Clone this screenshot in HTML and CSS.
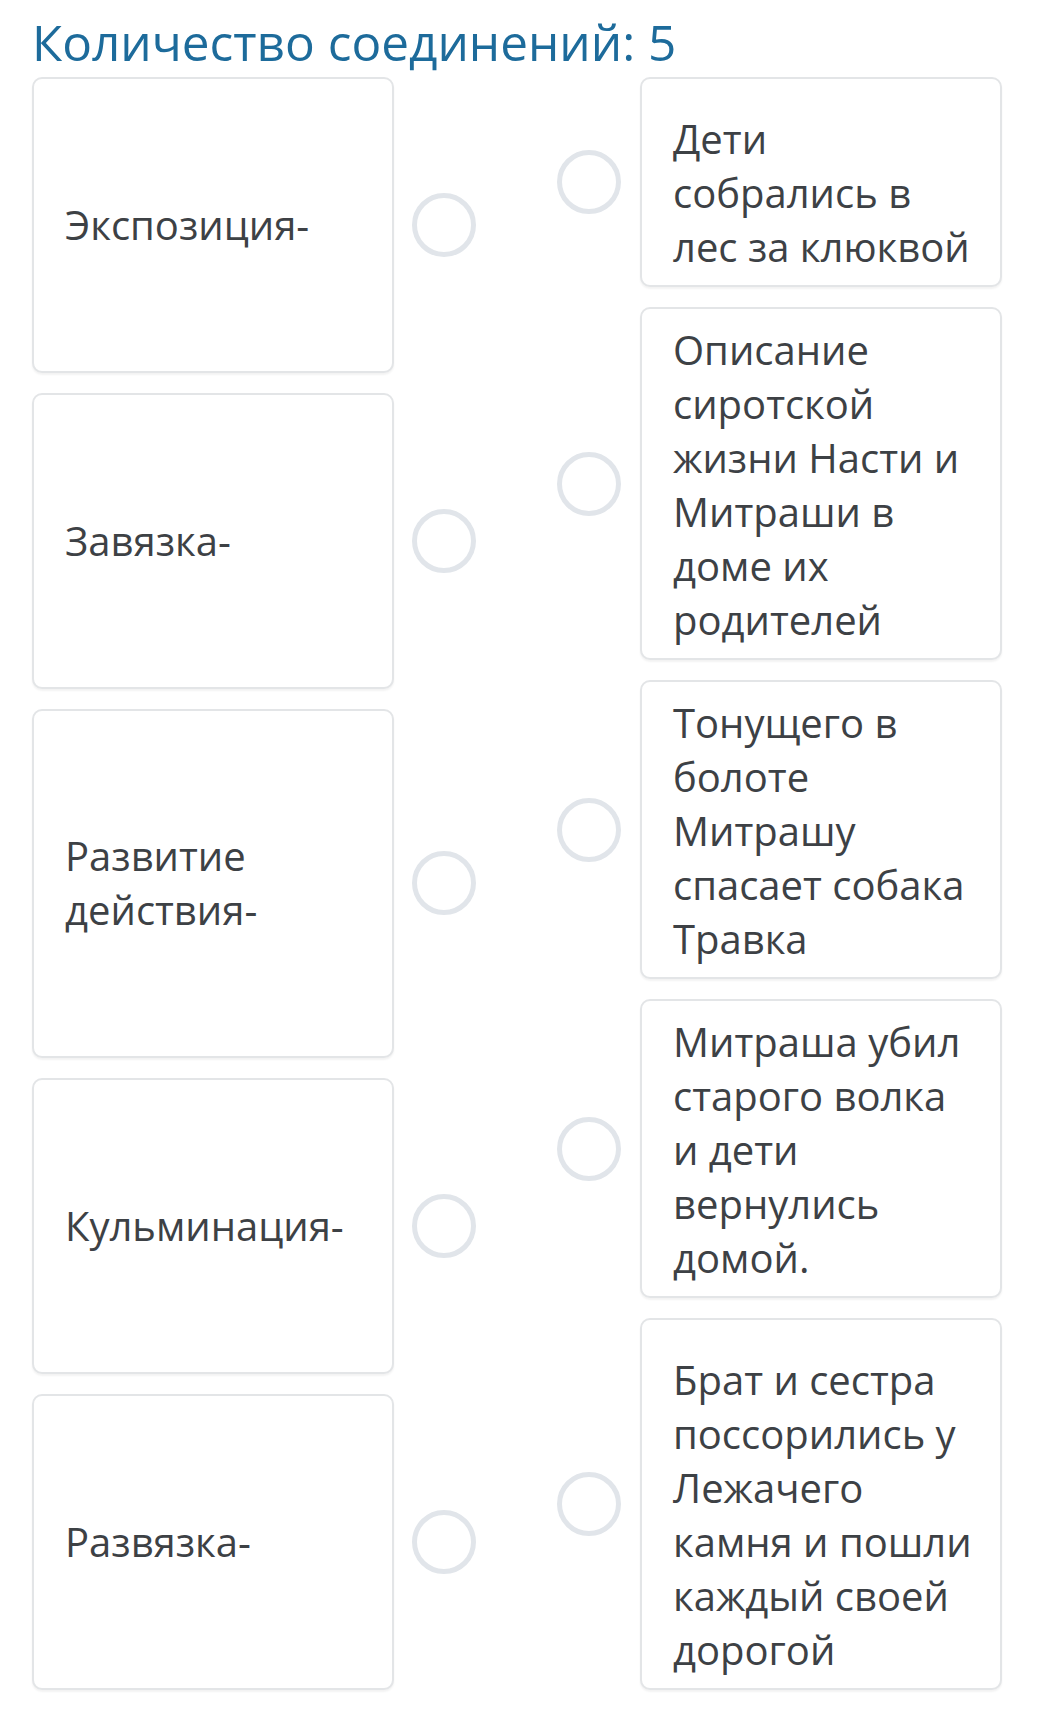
FILE: index.html
```html
<!DOCTYPE html>
<html lang="ru">
<head>
<meta charset="utf-8">
<title>Количество соединений</title>
<link rel="stylesheet" href="styles.css">
</head>
<body>
<div class="page">
  <h1 class="title">Количество соединений: 5</h1>
  <div class="board">
    <div class="col col-left">
      <div class="item">
        <div class="card">Экспозиция-</div>
        <span class="dot"></span>
      </div>
      <div class="item">
        <div class="card">Завязка-</div>
        <span class="dot"></span>
      </div>
      <div class="item">
        <div class="card">Развитие действия-</div>
        <span class="dot"></span>
      </div>
      <div class="item">
        <div class="card">Кульминация-</div>
        <span class="dot"></span>
      </div>
      <div class="item">
        <div class="card">Развязка-</div>
        <span class="dot"></span>
      </div>
    </div>
    <div class="col col-right">
      <div class="item grow">
        <span class="dot"></span>
        <div class="card card-r">Дети собрались в лес за клюквой</div>
      </div>
      <div class="item">
        <span class="dot"></span>
        <div class="card card-r">Описание сиротской жизни Насти и Митраши в доме их родителей</div>
      </div>
      <div class="item">
        <span class="dot"></span>
        <div class="card card-r">Тонущего в болоте Митрашу спасает собака Травка</div>
      </div>
      <div class="item">
        <span class="dot"></span>
        <div class="card card-r">Митраша убил старого волка и дети вернулись домой.</div>
      </div>
      <div class="item grow">
        <span class="dot"></span>
        <div class="card card-r">Брат и сестра поссорились у Лежачего камня и пошли каждый своей дорогой</div>
      </div>
    </div>
  </div>
</div>
</body>
</html>
```
FILE: styles.css
```css
html, body {
  margin: 0;
  padding: 0;
  background: #ffffff;
}

body {
  font-family: "Open Sans", "Noto Sans", sans-serif;
  color: #3d4145;
}

.page {
  padding: 8px 0 24px 32px;
  width: 970px;
}

.title {
  margin: 0;
  font-size: 49.5px;
  font-weight: 400;
  line-height: 68px;
  color: #1d6b9b;
  letter-spacing: 0;
}

.board {
  display: flex;
  justify-content: space-between;
  min-height: 1613px;
  margin-top: 1px;
}

.col {
  display: flex;
  flex-direction: column;
  gap: 20px;
}

.col-left .item {
  flex: 1 1 auto;
  gap: 18px;
}

.col-right .item {
  flex: 0 0 auto;
  gap: 19px;
}

.col-right .item.grow {
  flex: 1 1 auto;
}

.item {
  display: flex;
  align-items: center;
}

.card {
  box-sizing: border-box;
  width: 362px;
  align-self: stretch;
  display: flex;
  align-items: center;
  padding: 12px 27px 12px 31px;
  border: 2px solid #e3e5e7;
  border-radius: 10px;
  box-shadow: 0 2px 2px rgba(0, 0, 0, 0.05);
  background: #ffffff;
  font-size: 40px;
  line-height: 54px;
}

.card-r {
  align-items: flex-end;
  padding: 14px 27px 11px 31px;
}

.dot {
  flex: 0 0 auto;
  box-sizing: border-box;
  width: 64px;
  height: 64px;
  border: 5px solid #e1e5ea;
  border-radius: 50%;
}
```
